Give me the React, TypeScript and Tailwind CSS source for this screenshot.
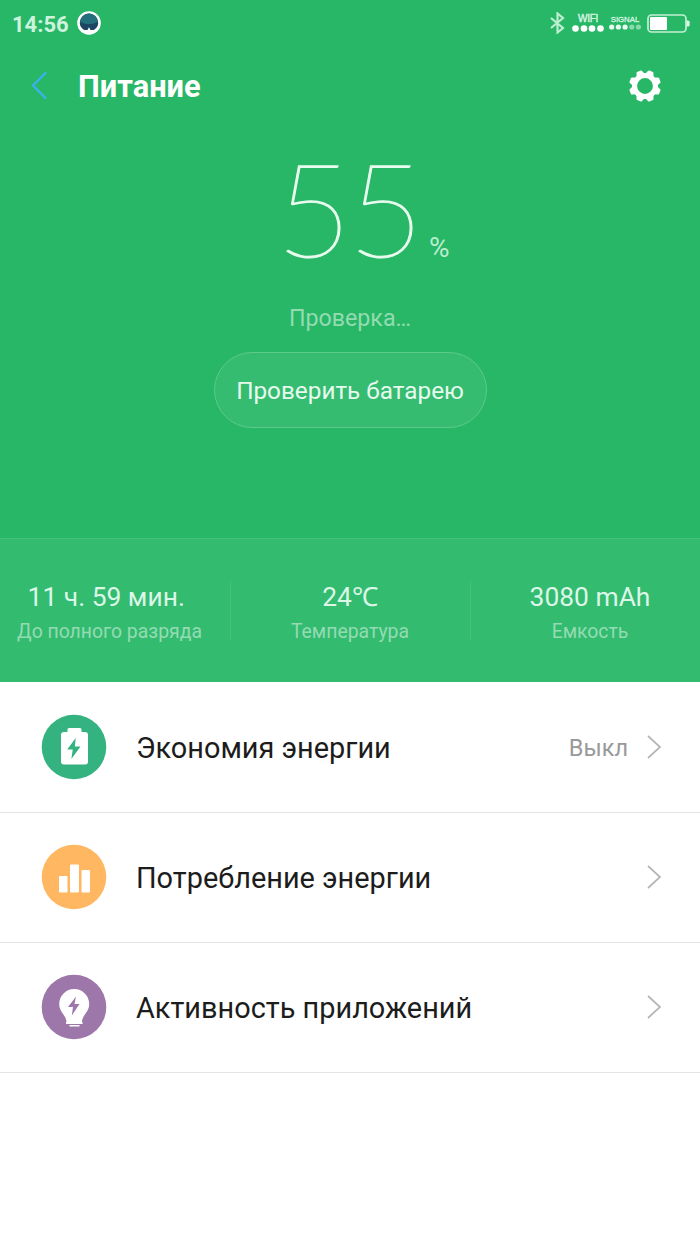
import type { ReactNode } from "react";

const stats = [
  { value: "11 ч. 59 мин.\u00a0", label: "До полного разряда" },
  { value: "24℃", label: "Температура" },
  { value: "3080 mAh", label: "Емкость" },
];

function StatusBar() {
  return (
    <div className="flex h-12 items-center justify-between pl-3 pr-[10px]">
      <div className="flex items-center gap-[9px]">
        <span className="pt-px text-[22px] leading-[47px] font-bold text-[#cdf3dc]">14:56</span>
        <svg className="-mt-[2px] -ml-px h-6 w-6" viewBox="0 0 24 24">
          <circle cx="12" cy="12" r="11.8" fill="#fff" />
          <path d="M12 2.600a9.200 9.200 0 0 0-9.200 9c0 3.400 1.600 5.900 4.400 7.400h3.300l1.500-2.800 1.500 2.800h3.300c2.800-1.500 4.400-4 4.400-7.400a9.200 9.200 0 0 0-9.200-9z" fill="#1c4563" />
          <path d="M12 2.600a9.200 9.200 0 0 0-9 7.800c5 3.600 13 3.600 18 0A9.200 9.200 0 0 0 12 2.600z" fill="#236f7c" />
        </svg>
      </div>
      <div className="flex items-center">
        <svg className="mr-[7px] -mt-[2px] h-[22px] w-[15px]" viewBox="0 0 15 22" fill="none" stroke="#bdeecf" strokeWidth="2.200">
          <path d="M1 6l12 10-5.500 4.500v-19L13 6 1 16" />
        </svg>
        <div className="-mt-[2px] mr-[5px] flex w-8 flex-col items-center gap-px">
          <span className="font-['Liberation_Sans',sans-serif] text-[10px] leading-[10px] tracking-[-0.3px] text-[#d8f6e3] [-webkit-text-stroke:0.4px]">WIFI</span>
          <svg className="h-[7px] w-8" viewBox="0 0 32 7" fill="#fff">
            <circle cx="3.500" cy="3.500" r="3.300" />
            <circle cx="12" cy="3.500" r="3.300" />
            <circle cx="20" cy="3.500" r="3.300" />
            <circle cx="28.500" cy="3.500" r="3.300" />
          </svg>
        </div>
        <div className="-mt-[2px] mr-[6px] flex w-8 flex-col items-center">
          <span className="font-['Liberation_Sans',sans-serif] text-[7.800px] leading-[8px] text-[#d8f6e3] [-webkit-text-stroke:0.3px]">SIGNAL</span>
          <svg className="h-[6px] w-8" viewBox="0 0 32 6" fill="#e9fbf0">
            <circle cx="2.700" cy="3" r="2.600" />
            <circle cx="9.400" cy="3" r="2.600" />
            <circle cx="16.100" cy="3" r="2.600" />
            <circle cx="22.800" cy="3" r="2.600" opacity="0.500" />
            <circle cx="29.400" cy="3" r="2.600" opacity="0.500" />
          </svg>
        </div>
        <svg className="-mt-[2px] h-[19px] w-[43px]" viewBox="0 0 43 19">
          <rect x="1" y="1" width="38" height="17" rx="3.500" fill="none" stroke="#c3f0d4" strokeWidth="1.700" />
          <rect x="3" y="3" width="17" height="13" rx="1" fill="#fff" />
          <path d="M39.500 6.500h1a2 2 0 0 1 2 3 2 2 0 0 1-2 3h-1z" fill="#d8f6e3" />
        </svg>
      </div>
    </div>
  );
}

function Chevron() {
  return (
    <svg className="h-6 w-[14px]" viewBox="0 0 14 24" fill="none" stroke="#b5b5b5" strokeWidth="1.700">
      <path d="M1 1l12 11L1 23" />
    </svg>
  );
}

function GearIcon() {
  return (
    <svg className="h-8 w-8" viewBox="-16 -16 32 32">
      <g fill="#fff">
        <path
          fillRule="evenodd"
          d="M0-13A13 13 0 1 1 0 13 13 13 0 1 1 0-13zM0-7.900A7.900 7.900 0 1 0 0 7.900 7.900 7.900 0 1 0 0-7.900z"
        />
        {[22.5, 67.5, 112.5, 157.5, 202.5, 247.5, 292.5, 337.5].map((angle) => (
          <path key={angle} d="M-4.500-11L-3-15Q-2.700-16-1.900-16H1.900Q2.700-16 3-15L4.500-11z" transform={`rotate(${angle})`} />
        ))}
      </g>
    </svg>
  );
}

function Row({ icon, title, value }: { icon: ReactNode; title: string; value?: string }) {
  return (
    <li className="flex h-[130px] items-center border-b border-[#e4e4e4] pr-[39px] pb-[2px] pl-[41px]">
      <svg className="h-[66px] w-[66px]" viewBox="0 0 66 66">
        {icon}
      </svg>
      <span className="ml-[29px] flex-1 pt-[2px] text-[28.900px] leading-10 text-[#1c1c1c]">{title}</span>
      {value && <span className="mr-[19px] pt-[2px] text-[23.500px] leading-8 text-[#999]">{value}</span>}
      <Chevron />
    </li>
  );
}

export default function App() {
  return (
    <div className="h-[1244px] w-[700px] overflow-hidden bg-white font-[Roboto,sans-serif]">
      <header className="flex h-[538px] flex-col bg-[#28b766]">
        <StatusBar />
        <nav className="flex h-[76px] items-center pr-[39px] pl-[31px]">
          <svg className="-mt-[2px] h-[28px] w-4" viewBox="0 0 16 28" fill="none" stroke="#3fb0ee" strokeWidth="2.300" strokeLinecap="round">
            <path d="M14.500 2L2 14.500 14.500 27" />
          </svg>
          <h1 className="ml-[31px] flex-1 pt-px text-[30.800px] leading-[75px] font-bold text-white">Питание</h1>
          <GearIcon />
        </nav>

        <div className="mt-[14px] flex h-[144px] items-baseline pl-[276px] text-[#e8fbef]">
          <span className="font-[Lato,sans-serif] text-[131px] leading-[138px] font-thin tracking-[-4px] [-webkit-text-stroke:1.200px]">55</span>
          <span className="ml-[9px] text-[28px] text-[#bdeccf]">%</span>
        </div>

        <div className="mt-[20px] flex flex-col items-center">
          <p className="pt-px text-[23.200px] leading-[31px] text-[#93dbb1]">Проверка…</p>
          <button className="mt-[18px] h-[76px] w-[273px] rounded-full border border-[#5cca8b] bg-[#35bc71] pt-[3px] text-[24.300px] text-[#e6faee]">
            Проверить батарею
          </button>
        </div>
      </header>

      <section className="flex h-[144px] items-center justify-center border-t border-[#44c17b] bg-[#33bb70] pb-[2px]">
        {stats.map((stat) => (
          <div key={stat.label} className="flex h-[58px] w-[240px] shrink-0 flex-col items-center border-l border-[#44c17b] pr-px whitespace-nowrap first:border-l-0">
            <p className="text-[26.400px] leading-[32px] text-[#dcf7e7]">{stat.value}</p>
            <p className="mt-[5px] text-[19.400px] leading-[28px] text-[#94dbb2]">{stat.label}</p>
          </div>
        ))}
      </section>

      <ul className="pt-px">
        <Row
          title="Экономия энергии"
          value="Выкл"
          icon={
            <>
              <circle cx="33" cy="33" r="32.300" fill="#34b380" />
              <path d="M28 14h11a1.500 1.500 0 0 1 1.500 1.500V18h3.500a3 3 0 0 1 3 3v26.500a3 3 0 0 1-3 3H23a3 3 0 0 1-3-3V21a3 3 0 0 1 3-3h3.500v-2.500A1.500 1.500 0 0 1 28 14z" fill="#fff" />
              <path d="M34.700 24l-8.500 11.500h5.500l-1.300 9.500L39.500 32.500h-5.600z" fill="#34b380" />
            </>
          }
        />
        <Row
          title="Потребление энергии"
          icon={
            <>
              <circle cx="33" cy="33" r="32.300" fill="#ffb761" />
              <rect x="18" y="32" width="8.500" height="16.500" rx="1" fill="#fff" />
              <rect x="29" y="20.500" width="9" height="28" rx="1" fill="#fff" />
              <rect x="40.500" y="26" width="8.500" height="22.500" rx="1" fill="#fff" />
            </>
          }
        />
        <Row
          title="Активность приложений"
          icon={
            <>
              <circle cx="33" cy="33" r="32.300" fill="#9d76aa" />
              <path d="M33.200 15A15 15 0 0 0 18.200 30c0 8 6.800 11 7.300 18h15.400c.5-7 7.300-10 7.300-18A15 15 0 0 0 33.200 15zM25 48h16.500v2H25zM28.500 51h10v1.500h-10z" fill="#fff" />
              <path d="M35 22.500l-8 10.500h5l-1.200 8.500 7.700-11.500h-5z" fill="#9d76aa" />
            </>
          }
        />
      </ul>
    </div>
  );
}
